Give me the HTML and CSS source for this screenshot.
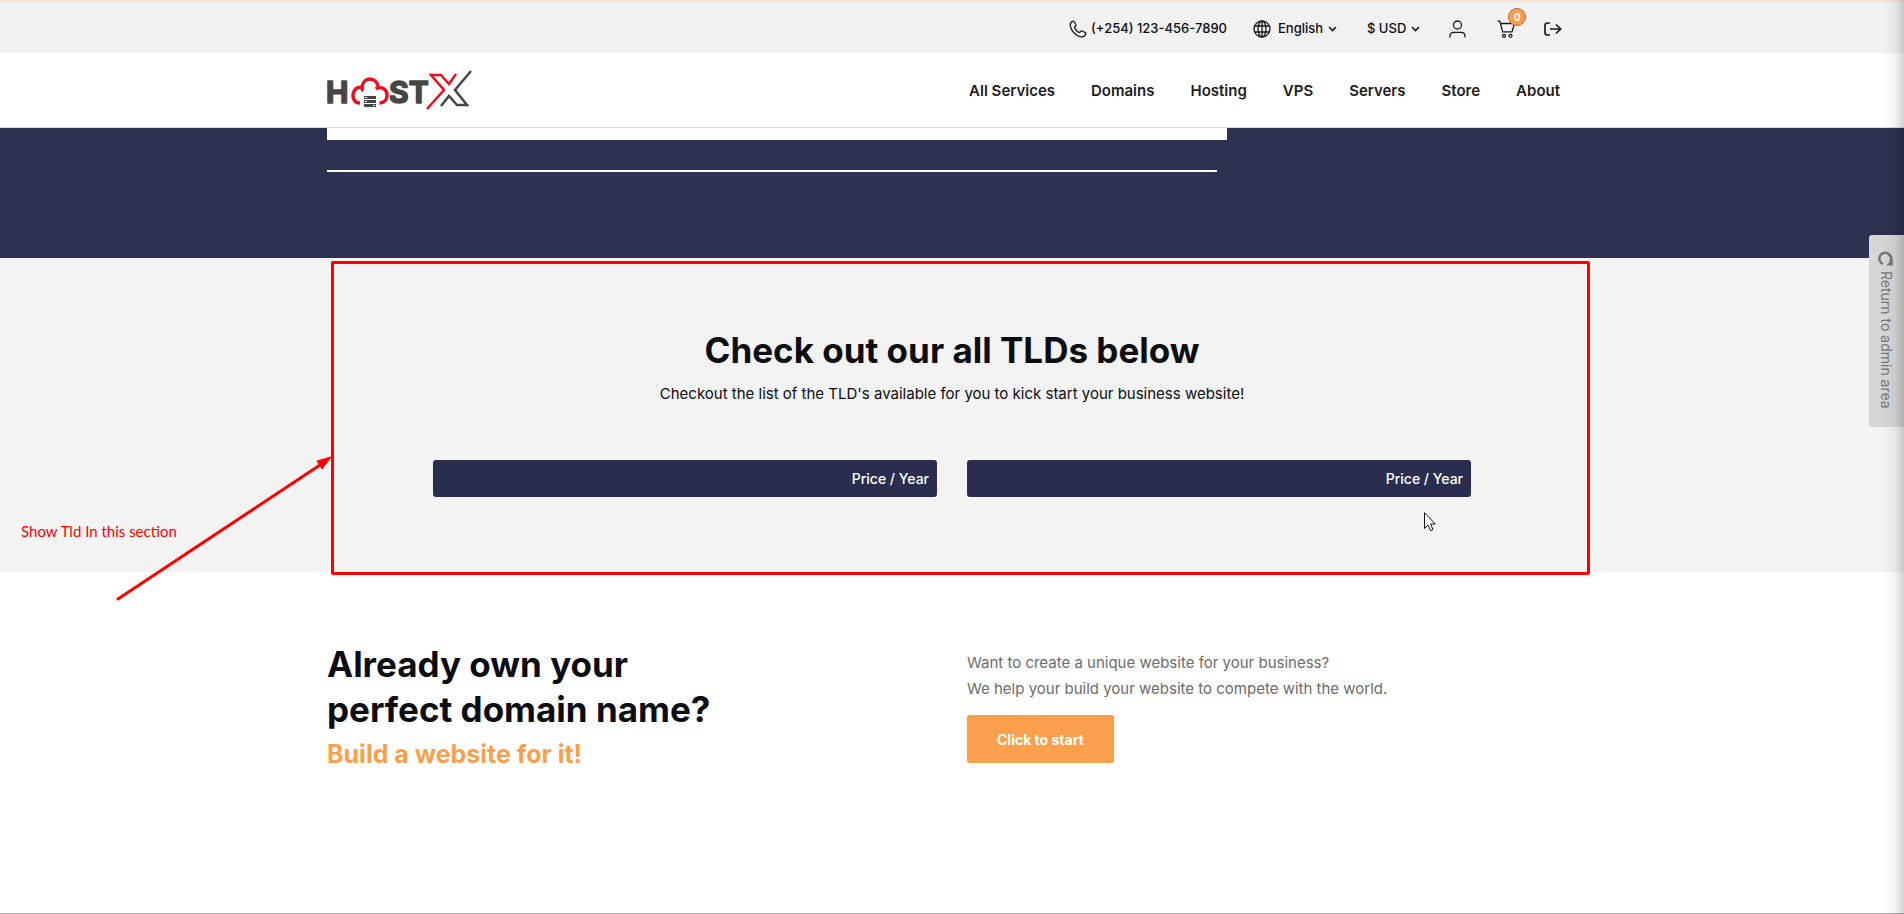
FILE: index.html
```
<!DOCTYPE html>
<html lang="en">
<head>
  <meta charset="UTF-8">
  <title>HostX - Domains</title>
  <link rel="stylesheet" href="styles.css">
</head>
<body>

  <!-- Top bar -->
  <div class="topbar">
    <div class="container topbar-inner">
      <a class="phone" href="tel:+2541234567890">
        <svg width="18" height="18" viewBox="0 0 18 18"><path d="M4.2 1.2C2.3 1.6 1 3.200 1.300 5.600C2 10.600 6.600 16 11.800 16.800C14.200 17.100 16.200 16 16.800 13.900C17 13.300 16.800 12.900 16.300 12.600L13.300 11C12.800 10.700 12.200 10.800 11.800 11.200L10.900 12.200C10.500 12.600 10 12.600 9.500 12.300C8 11.300 6.500 9.600 5.700 8.100C5.400 7.600 5.500 7.100 5.900 6.700L6.600 6C7 5.600 7.100 5 6.800 4.500L5.300 1.700C5.100 1.300 4.700 1.100 4.200 1.200Z"/></svg>
        <span>(+254) 123-456-7890</span>
      </a>
      <label class="picker language">
        <svg class="globe" width="18" height="18" viewBox="0 0 18 18"><circle cx="9" cy="9" r="8"/><ellipse cx="9" cy="9" rx="4" ry="8"/><path d="M9 1V17M1.500 6H16.500M1.500 12H16.500"/></svg>
        <select aria-label="Language"><option>English</option></select>
        <svg class="chevron" width="9" height="6" viewBox="0 0 9 6"><path d="M1 1L4.500 4.500L8 1"/></svg>
      </label>
      <label class="picker currency">
        <select aria-label="Currency"><option>$ USD</option></select>
        <svg class="chevron" width="9" height="6" viewBox="0 0 9 6"><path d="M1 1L4.500 4.500L8 1"/></svg>
      </label>
      <a class="icon-link user" href="#" aria-label="Account">
        <svg width="17" height="18" viewBox="0 0 17 18"><circle cx="8.500" cy="5" r="4"/><path d="M1 17.500V16C1 13.500 2.500 12.300 5 12.300H12C14.500 12.300 16 13.500 16 16V17.500"/></svg>
      </a>
      <a class="icon-link cart" href="#" aria-label="Cart">
        <svg width="19" height="18" viewBox="0 0 19 18"><path d="M0.500 1.200H2.800L3.500 3.500L5.600 11.800H15L17.600 3.500H3.500"/><circle cx="7" cy="15.800" r="1.500"/><circle cx="13.500" cy="15.800" r="1.500"/></svg>
        <span class="badge">0</span>
      </a>
      <a class="icon-link logout" href="#" aria-label="Logout">
        <svg width="18" height="14" viewBox="0 0 18 14"><path d="M6 1H3.500C2 1 1 2 1 3.500V10.500C1 12 2 13 3.500 13H6M6 7H16.500M12 2.500L16.700 7L12 11.500"/></svg>
      </a>
    </div>
  </div>

  <!-- Header -->
  <header class="header">
    <div class="container header-inner">
      <a class="logo" href="#" aria-label="HostX">
        <svg width="146" height="42" viewBox="0 0 146 42">
          <text class="logo-text" x="-1" y="34">H</text>
          <path class="logo-cloud" d="M33 34C28 34 25.500 30 26 25.500C26.500 21 30 17.500 35 18.500C35.500 13 39 10 43 10C47 10 50.500 13 51.500 18.500C56 18 60 21 60 26C60 31 57 34 52.500 34M36 22C35 21 35 20 35 18.500M51.500 18.500L48.500 19.500"/>
          <path class="logo-server" d="M37 28.500H49M37 32.500H49M37 36.500H49"/>
          <path class="logo-server-dots" d="M38 28.500H40M38 32.500H40M46 36.500H48"/>
          <text class="logo-text" x="62" y="34">ST</text>
          <path class="logo-red" d="M100 40L117 21L104 6H114L122 15L129 5"/>
          <path class="logo-dark" d="M144 2L128 21L140 36H130L122 27L114 37"/>
        </svg>
      </a>
      <nav class="nav">
        <a href="#">All Services</a>
        <a href="#">Domains</a>
        <a href="#">Hosting</a>
        <a href="#">VPS</a>
        <a href="#">Servers</a>
        <a href="#">Store</a>
        <a href="#">About</a>
      </nav>
    </div>
  </header>

  <section class="search-band">
    <div class="container">
      <div class="search-box"></div>
      <hr class="search-line">
    </div>
  </section>

  <!-- TLD list -->
  <section class="tlds">
    <h2>Check out our all TLDs below</h2>
    <p>Checkout the list of the TLD's available for you to kick start your business website!</p>
    <div class="tld-tables">
      <table><thead><tr><th scope="col">Price / Year</th></tr></thead></table>
      <table><thead><tr><th scope="col">Price / Year</th></tr></thead></table>
    </div>

    <!-- Note on the section -->
    <div class="note-frame"></div>
    <span class="note-text">Show Tld In this section</span>
    <svg class="note-arrow" width="216" height="146" viewBox="0 0 216 146"><path d="M2 144L204 10" stroke="#f00" stroke-width="3" stroke-linecap="round"/><path d="M215 2L201 6L203 9L206 14Z" fill="#f00" stroke="#f00"/></svg>
    <svg class="pointer" width="12" height="20" viewBox="0 0 12 20"><path d="M0.500 0.700V16.500L4 13L6.600 18.700L9 17.600L6.500 12H11.300Z"/></svg>
  </section>

  <!-- Website builder -->
  <section class="container builder">
    <div>
      <h2>Already own your<br>perfect domain name?</h2>
      <h3>Build a website for it!</h3>
    </div>
    <div class="builder-info">
      <p>Want to create a unique website for your business?<br>We help your build your website to compete with the world.</p>
      <button type="button">Click to start</button>
    </div>
  </section>

  <a class="admin-tab" href="#">
    <svg width="15" height="15" viewBox="0 0 14 14"><path d="M4.500 12.200A5.500 5.500 0 1 1 11.500 10" fill="none" stroke="#777" stroke-width="2.400"/><path d="M13.800 13.500H7.500L13.800 7.500Z" fill="#777"/></svg>
    <span>Return to admin area</span>
  </a>
  <div class="edge-shadow"></div>

</body>
</html>
```
FILE: styles.css
```
* {
  box-sizing: border-box;
}

body {
  margin: 0;
  min-height: 100vh;
  background: #fff;
  border-bottom: 1px solid #aeb0b5;
  font-family: Inter, sans-serif;
  font-size: 15px;
  line-height: 26px;
  color: #0b0d12;
}

a {
  color: inherit;
  text-decoration: none;
}

h2,
h3,
p {
  margin: 0;
}

h2 {
  font-size: 35px;
  line-height: 45px;
  font-weight: 700;
}

.container {
  width: 100%;
  max-width: 1280px;
  margin: 0 auto;
  padding: 0 15px;
}

/* Top bar */
.topbar {
  background: #f2f2f2;
  border-top: 2px solid #f8e2d8;
}

.topbar-inner {
  display: flex;
  justify-content: flex-end;
  align-items: center;
  height: 51px;
  padding-top: 2px;
  padding-right: 30px;
  font-size: 13px;
  font-weight: 500;
}

.topbar svg {
  display: block;
  fill: none;
  stroke: #1a1a1a;
  stroke-width: 1.3;
}

.phone,
.picker {
  display: flex;
  align-items: center;
}

.phone {
  gap: 4px;
  margin-right: 26px;
}

.phone span,
.picker select {
  margin-bottom: 2px;
}

.picker {
  gap: 4px;
}

.picker select {
  appearance: none;
  border: none;
  padding: 0;
  background: none;
  font: inherit;
  color: inherit;
}

.language {
  margin-right: 30px;
}

.language select {
  margin-left: 3px;
}

.currency {
  margin-right: 29px;
}

.topbar .chevron {
  stroke-width: 1.6;
}

.icon-link {
  position: relative;
}

.user {
  margin-right: 31px;
}

.cart {
  margin-right: 28px;
}

.topbar .logout svg {
  stroke-width: 1.7;
}

.badge {
  position: absolute;
  top: -12px;
  left: 11px;
  width: 18px;
  height: 18px;
  border: 1px solid #c0693a;
  border-radius: 50%;
  background: #fa9f4b;
  color: #fff;
  font-size: 10px;
  font-weight: 700;
  line-height: 16px;
  text-align: center;
}

/* Header */
.header {
  border-bottom: 1px solid #ddd;
}

.header-inner {
  display: flex;
  justify-content: space-between;
  align-items: center;
  height: 74px;
}

.logo svg {
  display: block;
}

.logo-text {
  font-family: Inter, sans-serif;
  font-size: 30px;
  font-weight: 700;
  fill: #464646;
  stroke: #464646;
  stroke-width: 1.5;
  stroke-linejoin: round;
}

.logo-cloud,
.logo-red,
.logo-dark,
.logo-server,
.logo-server-dots {
  fill: none;
  stroke: #f00d1a;
  stroke-width: 3.5;
}

.logo-red {
  stroke-width: 2.5;
}

.logo-dark {
  stroke: #464646;
  stroke-width: 2.5;
}

.logo-server {
  stroke: #464646;
  stroke-width: 3;
}

.logo-server-dots {
  stroke: #fff;
  stroke-width: 1;
}

.nav {
  display: flex;
  gap: 36px;
  padding-top: 1px;
  padding-right: 17px;
  font-weight: 600;
  color: #1c1c1c;
}

/* Search band */
.search-band {
  height: 130px;
  background: #2e3150;
}

.search-box {
  width: 72%;
  height: 12px;
  background: #fff;
}

.search-line {
  width: 890px;
  max-width: 100%;
  height: 2px;
  margin: 30px 0 0;
  border: none;
  background: #fff;
}

/* TLD list */
.tlds {
  position: relative;
  padding: 70px 0 75px;
  background: #f3f3f3;
  text-align: center;
}

.tlds h2 {
  margin-bottom: 8px;
}

.tld-tables {
  display: grid;
  grid-template-columns: 1fr 1fr;
  gap: 30px;
  max-width: 1038px;
  margin: 53px auto 0;
}

.tld-tables table {
  width: 100%;
  border-spacing: 0;
}

.tld-tables th {
  height: 37px;
  padding: 0 8px;
  border-radius: 3px;
  background: #2a2d4e;
  color: #fff;
  font-size: 14px;
  font-weight: 500;
  text-align: right;
}

.note-frame {
  position: absolute;
  top: 3px;
  bottom: -3px;
  left: calc(50% - 621px);
  width: 1259px;
  border: 3px solid #f00;
  border-radius: 2px;
}

.note-text {
  position: absolute;
  top: 260px;
  left: 21px;
  color: #f00;
  font-family: Lato, sans-serif;
  font-size: 15px;
}

.note-arrow {
  position: absolute;
  top: 197px;
  left: calc(50% - 836px);
}

.pointer {
  position: absolute;
  top: 254px;
  left: calc(50% + 472px);
  fill: #fff;
  stroke: #111;
}

/* Website builder */
.builder {
  display: grid;
  grid-template-columns: 1fr 1fr;
  gap: 30px;
  padding-top: 70px;
}

.builder h3 {
  color: #fa9f4b;
  font-size: 25px;
  line-height: 45px;
}

.builder-info {
  padding-top: 8px;
  color: #6c6c6c;
}

.builder button {
  height: 48px;
  margin-top: 13px;
  padding: 0 30px;
  border: none;
  border-radius: 2px;
  background: #fa9f4b;
  color: #fff;
  font-family: inherit;
  font-size: 14px;
  font-weight: 700;
  cursor: pointer;
}

/* Admin tab */
.admin-tab {
  position: fixed;
  top: 235px;
  right: 0;
  display: flex;
  align-items: center;
  gap: 5px;
  width: 35px;
  height: 192px;
  padding: 16px 2px 16px 0;
  border-radius: 3px 0 0 3px;
  background: #d6d6d6;
  color: #777;
  font-size: 14px;
  writing-mode: vertical-rl;
}

.edge-shadow {
  position: fixed;
  top: 0;
  right: 0;
  bottom: 0;
  width: 22px;
  background: linear-gradient(to right, transparent, rgba(0,0,0,0.05) 60%, rgba(0,0,0,0.18));
  pointer-events: none;
}
```
